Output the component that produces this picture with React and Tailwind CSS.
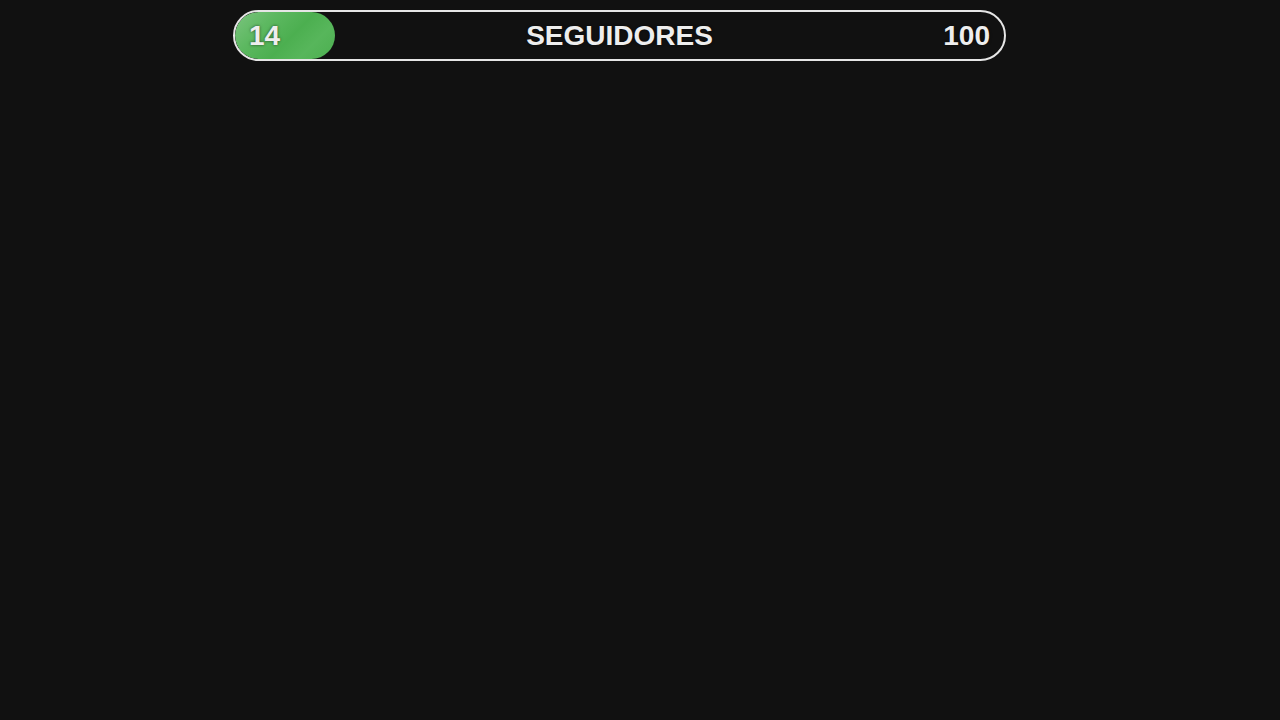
export default function App() {
  return (
    <div className="w-[1280px] h-[720px] bg-[#111111] pt-[10px]" style={{ fontFamily: '"Liberation Sans", Arial, sans-serif' }}>
      <div className="relative ml-[233px] w-[773px] h-[51px] rounded-full border-2 border-[#e6e6e6] bg-[#111111] overflow-hidden">
        <div className="absolute left-0 top-0 h-full w-[100px] rounded-full bg-[linear-gradient(135deg,#7cc47f_0%,#5cb860_30%,#4caf50_55%,#57b65b_75%,#4caf50_100%)]" />
        <div className="relative flex h-full items-center justify-between px-[14px] text-[28px] font-bold text-[#eeeeee] [text-shadow:0_0_3px_rgba(0,0,0,0.6)]">
          <span>14</span>
          <span className="absolute left-1/2 -translate-x-1/2">SEGUIDORES</span>
          <span>100</span>
        </div>
      </div>
    </div>
  );
}
